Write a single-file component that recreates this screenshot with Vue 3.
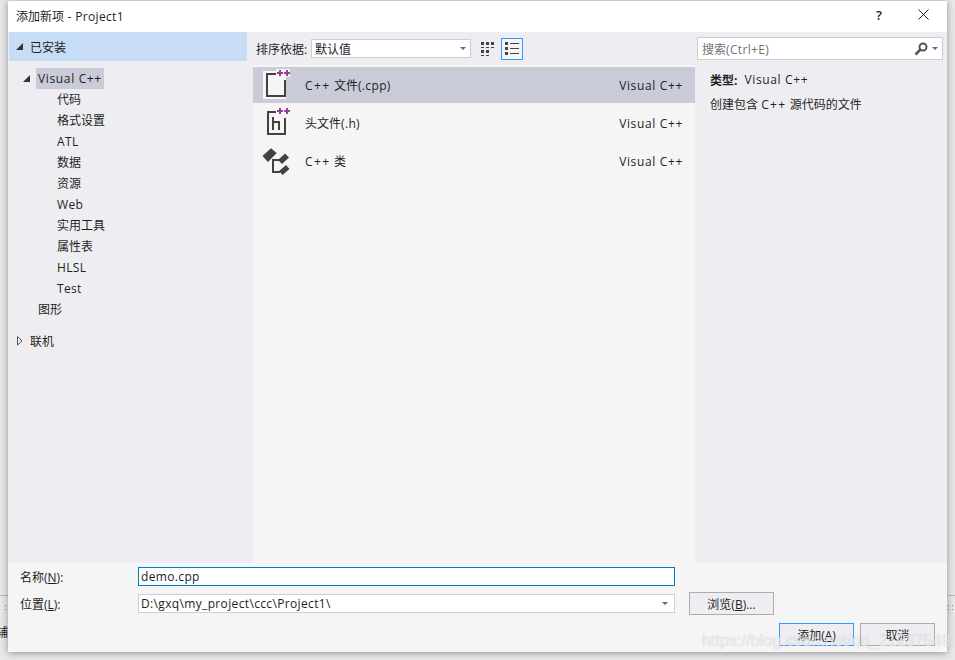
<script setup>
const categories = ['代码', '格式设置', 'ATL', '数据', '资源', 'Web', '实用工具', '属性表', 'HLSL', 'Test']
const templates = [
  { name: 'C++ 文件(.cpp)', lang: 'Visual C++', icon: 'cpp', selected: true },
  { name: '头文件(.h)', lang: 'Visual C++', icon: 'h' },
  { name: 'C++ 类', lang: 'Visual C++', icon: 'class' }
]

// latin runs get a little extra tracking, the CJK ones stay on the 12px grid
const parts = (text) =>
  text
    .split(/([\u4e00-\u9fff]+|C\+\+)/)
    .filter(Boolean)
    .map((t) => ({
      t,
      cls: /[\u4e00-\u9fff]/.test(t) ? '' : t === 'C++' ? 'cpp' : 'lat'
    }))
</script>

<template>
  <main class="desktop">
    <div class="behind-line"></div>
    <svg class="grip grip-left" width="3" height="6" viewBox="0 0 3 6" fill="#888">
      <path d="M0 0h1v1H0zM0 4h1v1H0z" />
    </svg>
    <svg class="grip grip-right" width="6" height="6" viewBox="0 0 6 6" fill="#888">
      <path d="M0 0h1v1H0zM4 0h1v1H4zM0 4h1v1H0zM4 4h1v1H4z" />
    </svg>
    <div class="behind-label">辅</div>

    <section class="dialog">
      <header class="titlebar">
        <span class="title">添加新项<span class="lat"> - Project1</span></span>
        <span class="help">?</span>
        <svg class="close" width="11" height="11" viewBox="0 0 11 11">
          <path d="M.5.5l10 10M10.500.5l-10 10" stroke="#222" stroke-width="1" fill="none" />
        </svg>
      </header>

      <div class="body">
        <aside class="tree">
          <div class="installed">
            <i class="arrow-open"></i>
            <span>已安装</span>
          </div>
          <div class="vc-row">
            <i class="arrow-open"></i>
            <span class="vc-label vc">Visual C++</span>
          </div>
          <div v-for="c in categories" :key="c" class="leaf">
            <span v-for="p in parts(c)" :key="p.t" :class="p.cls">{{ p.t }}</span>
          </div>
          <div class="shapes">图形</div>
          <div class="online">
            <svg class="arrow-closed" width="6" height="10" viewBox="0 0 6 10">
              <path d="M.5.500v8.500L5 5z" fill="none" stroke="#555" />
            </svg>
            <span>联机</span>
          </div>
        </aside>

        <div class="center">
          <div class="sortbar">
            <span class="sort-label">排序依据:</span>
            <div class="sort-select">
              <span>默认值</span>
              <i class="caret"></i>
            </div>
            <button class="view-btn grid-btn">
              <svg width="14" height="14" viewBox="0 0 14 14" fill="#444">
                <path d="M0 0h3v3H0zM5 0h3v3H5zM10 0h3v3h-3zM0 5h3v1H0zM5 5h3v1H5zM10 5h3v1h-3zM0 8h3v3H0zM5 8h3v3H5zM0 13h3v1H0zM5 13h3v1H5z" />
              </svg>
            </button>
            <button class="view-btn active">
              <svg width="14" height="14" viewBox="0 0 14 14" fill="#444">
                <path d="M0 0h3v3H0zM0 5h3v3H0zM0 10h3v3H0zM5 1h9v1H5zM5 6h9v1H5zM5 11h9v1H5z" />
              </svg>
            </button>
          </div>

          <div class="list">
            <div v-for="t in templates" :key="t.name" class="item" :class="{ selected: t.selected }">
              <svg v-if="t.icon === 'cpp'" class="item-icon" width="28" height="32" viewBox="0 0 28 32">
                <path d="M2 3h12v5h9v21H2z" fill="#f5f5f5" stroke="#f5f5f5" stroke-width="2" />
                <path d="M14 0h14v8H14z" fill="#f5f5f5" />
                <path d="M14 5H5v22h18V11" fill="none" stroke="#424242" stroke-width="2" />
                <path d="M15 4h6M18 1v6M22 4h6M25 1v6" stroke="#993f97" stroke-width="2" fill="none" />
              </svg>
              <svg v-else-if="t.icon === 'h'" class="item-icon" width="28" height="32" viewBox="0 0 28 32">
                <path d="M14 5H6v22h17V11" fill="none" stroke="#424242" stroke-width="2" />
                <path d="M11 10v13M11 15h6v8" fill="none" stroke="#424242" stroke-width="2" />
                <path d="M15 4h6M18 1v6M22 4h6M25 1v6" stroke="#993f97" stroke-width="2" fill="none" />
              </svg>
              <svg v-else class="item-icon" width="28" height="32" viewBox="0 0 28 32">
                <path d="M11 14v13h7M11 15h7" fill="none" stroke="#424242" stroke-width="2" />
                <path d="M.5 11L9 3.300 14.700 8 6 17zM16 15l7-6.500 4 4L20 19zM17 26l7-6 3.500 4-7 6z" fill="#424242" />
              </svg>
              <span class="item-name">
                <span v-for="p in parts(t.name)" :key="p.t" :class="p.cls">{{ p.t }}</span>
              </span>
              <span class="item-lang vc">{{ t.lang }}</span>
            </div>
          </div>
        </div>

        <aside class="details">
          <div class="search">
            <span class="search-text">搜索<span class="lat">(Ctrl+E)</span></span>
            <svg width="14" height="14" viewBox="0 0 14 14">
              <circle cx="9" cy="5" r="3.500" fill="none" stroke="#555" stroke-width="2" />
              <path d="M6.500 7.500L1.500 12.500" stroke="#555" stroke-width="2.500" />
            </svg>
            <i class="caret small"></i>
          </div>
          <div class="info">
            <div class="info-type"><b>类型:</b><span class="vc">Visual C++</span></div>
            <div class="info-desc">创建包含 <span class="cpp">C++</span> 源代码的文件</div>
          </div>
        </aside>
      </div>

      <footer class="footer">
        <div class="field-row">
          <label class="field-label">名称(<u>N</u>):</label>
          <div class="field name-field lat">demo.cpp</div>
        </div>
        <div class="field-row">
          <label class="field-label">位置(<u>L</u>):</label>
          <div class="field path-field">
            <span class="lat">D:\gxq\my_project\ccc\Project1\</span>
            <i class="caret"></i>
          </div>
          <button class="btn browse">浏览(<u>B</u>)...</button>
        </div>
        <div class="actions">
          <button class="btn primary">添加(<u>A</u>)</button>
          <button class="btn">取消</button>
        </div>
      </footer>
    </section>
    <div class="watermark">https://blog.csdn.net/qq_21287549</div>
  </main>
</template>

<style>
html,
body {
  margin: 0;
  overflow: hidden;
}
</style>

<style scoped>
.desktop {
  position: relative;
  width: 955px;
  height: 660px;
  box-sizing: border-box;
  padding: 1px 8px 8px;
  background: #e8e8e8;
  font-family: "Open Sans", "Noto Sans CJK SC", sans-serif;
  font-size: 12px;
  color: #1e1e1e;
  overflow: hidden;
}

.lat {
  letter-spacing: 0.35px;
}

.vc {
  letter-spacing: 0.65px;
}

.cpp {
  letter-spacing: 1.4px;
}

.behind-line {
  position: absolute;
  left: 0;
  right: 0;
  top: 595px;
  height: 1px;
  background: #b9b9c6;
}

.grip {
  position: absolute;
  top: 605px;
}

.grip-left {
  left: 5px;
}

.grip-right {
  left: 948px;
}

.behind-label {
  position: absolute;
  left: -4px;
  top: 623px;
  font-size: 12px;
}

.dialog {
  position: relative;
  width: 939px;
  height: 651px;
  display: flex;
  flex-direction: column;
  background: #f5f5f5;
  box-shadow: 0 1px 7px rgba(0, 0, 0, 0.38);
}

.titlebar {
  height: 31px;
  box-sizing: border-box;
  padding: 0 0 2px 8px;
  flex: none;
  display: flex;
  align-items: center;
  background: #fff;
}

.title {
  flex: 1;
}

.help {
  width: 13px;
  margin-right: 29px;
  font-size: 13px;
  font-weight: 600;
  padding-bottom: 1px;
}

.close {
  margin-right: 18px;
  margin-bottom: 2px;
}

.body {
  flex: none;
  height: 531px;
  display: flex;
  background: #eeeef2;
}

.tree {
  width: 239px;
  flex: none;
}

.installed {
  height: 29px;
  display: flex;
  align-items: center;
  gap: 7px;
  padding-left: 7px;
  margin-left: 1px;
  background: #c7dcf5;
}

.arrow-open {
  width: 0;
  height: 0;
  border-style: solid;
  border-width: 0 0 7px 7px;
  border-color: transparent transparent #333 transparent;
}

.arrow-closed {
  flex: none;
}

.vc-row {
  height: 21px;
  margin-top: 7px;
  display: flex;
  align-items: center;
  gap: 6px;
  padding-left: 15px;
}

.vc-label {
  height: 21px;
  line-height: 21px;
  padding: 0 2px;
  background: #c9cbd9;
}

.leaf {
  height: 21px;
  line-height: 21px;
  padding-left: 49px;
}

.shapes {
  height: 21px;
  line-height: 21px;
  padding-left: 30px;
}

.online {
  height: 21px;
  margin-top: 10px;
  display: flex;
  align-items: center;
  gap: 7px;
  padding-left: 9px;
}

.center {
  width: 442px;
  margin-left: 6px;
  flex: none;
  display: flex;
  flex-direction: column;
}

.sortbar {
  height: 33px;
  flex: none;
  display: flex;
  align-items: center;
  padding-left: 3px;
}

.sort-label {
  width: 55px;
  flex: none;
}

.sort-select {
  width: 160px;
  height: 19px;
  box-sizing: border-box;
  flex: none;
  display: flex;
  align-items: center;
  justify-content: space-between;
  padding: 0 4px 0 3px;
  background: #fff;
  border: 1px solid #ccced9;
}

.caret {
  width: 0;
  height: 0;
  border-style: solid;
  border-width: 3px 3px 0;
  border-color: #666 transparent transparent;
}

.caret.small {
  margin-left: 4px;
}

.view-btn {
  width: 22px;
  height: 22px;
  margin-left: 2px;
  padding: 0;
  display: flex;
  align-items: center;
  justify-content: center;
  background: transparent;
  border: 1px solid transparent;
}

.grid-btn {
  margin-left: 6px;
}

.view-btn.active {
  border-color: #3399ff;
  background: #f5f5f5;
}

.list {
  flex: 1;
  background: #f5f5f5;
  padding-top: 2px;
}

.item {
  height: 36px;
  margin-bottom: 2px;
  display: flex;
  align-items: center;
}

.item.selected {
  background: #c9cbd9;
}

.item-icon {
  margin-left: 9px;
  flex: none;
}

.item-name {
  margin-left: 15px;
  flex: 1;
}

.item-lang {
  margin-right: 12px;
}

.details {
  flex: 1;
  min-width: 0;
}

.search {
  height: 21px;
  margin: 5px 4px 0 2px;
  display: flex;
  align-items: center;
  padding: 0 4px;
  background: #fff;
  border: 1px solid #ccced9;
}

.search-text {
  flex: 1;
  color: #717171;
}

.info {
  padding: 11px 15px;
}

.info-type {
  display: flex;
  gap: 7px;
}

.info-type b {
  font-weight: 700;
}

.info-desc {
  margin-top: 6px;
}

.footer {
  flex: 1;
  padding: 4px 12px 0;
  display: flex;
  flex-direction: column;
  position: relative;
}

.field-row {
  display: flex;
  align-items: center;
  margin-bottom: 6px;
}

.field-label {
  width: 118px;
  flex: none;
}

.field {
  width: 537px;
  height: 19px;
  box-sizing: border-box;
  line-height: 17px;
  padding: 0 6px 0 2px;
  background: #fff;
}

.name-field {
  border: 1px solid #007acc;
}

.path-field {
  border: 1px solid #ccced9;
  display: flex;
  align-items: center;
  justify-content: space-between;
}

.btn {
  width: 75px;
  height: 23px;
  padding: 0;
  font: inherit;
  color: inherit;
  background: #eeeef2;
  border: 1px solid #acacac;
}

.browse {
  width: 85px;
  margin-left: 14px;
}

.btn.primary {
  border-color: #3399ff;
}

.actions {
  position: absolute;
  right: 12px;
  top: 60px;
  display: flex;
  gap: 6px;
}

.watermark {
  position: absolute;
  left: 702px;
  top: 632px;
  font-family: "Liberation Sans", sans-serif;
  font-size: 16px;
  letter-spacing: 0.1px;
  color: rgba(255, 255, 255, 0.6);
  text-shadow: 0 0 1px rgba(150, 150, 150, 0.5);
}
</style>
